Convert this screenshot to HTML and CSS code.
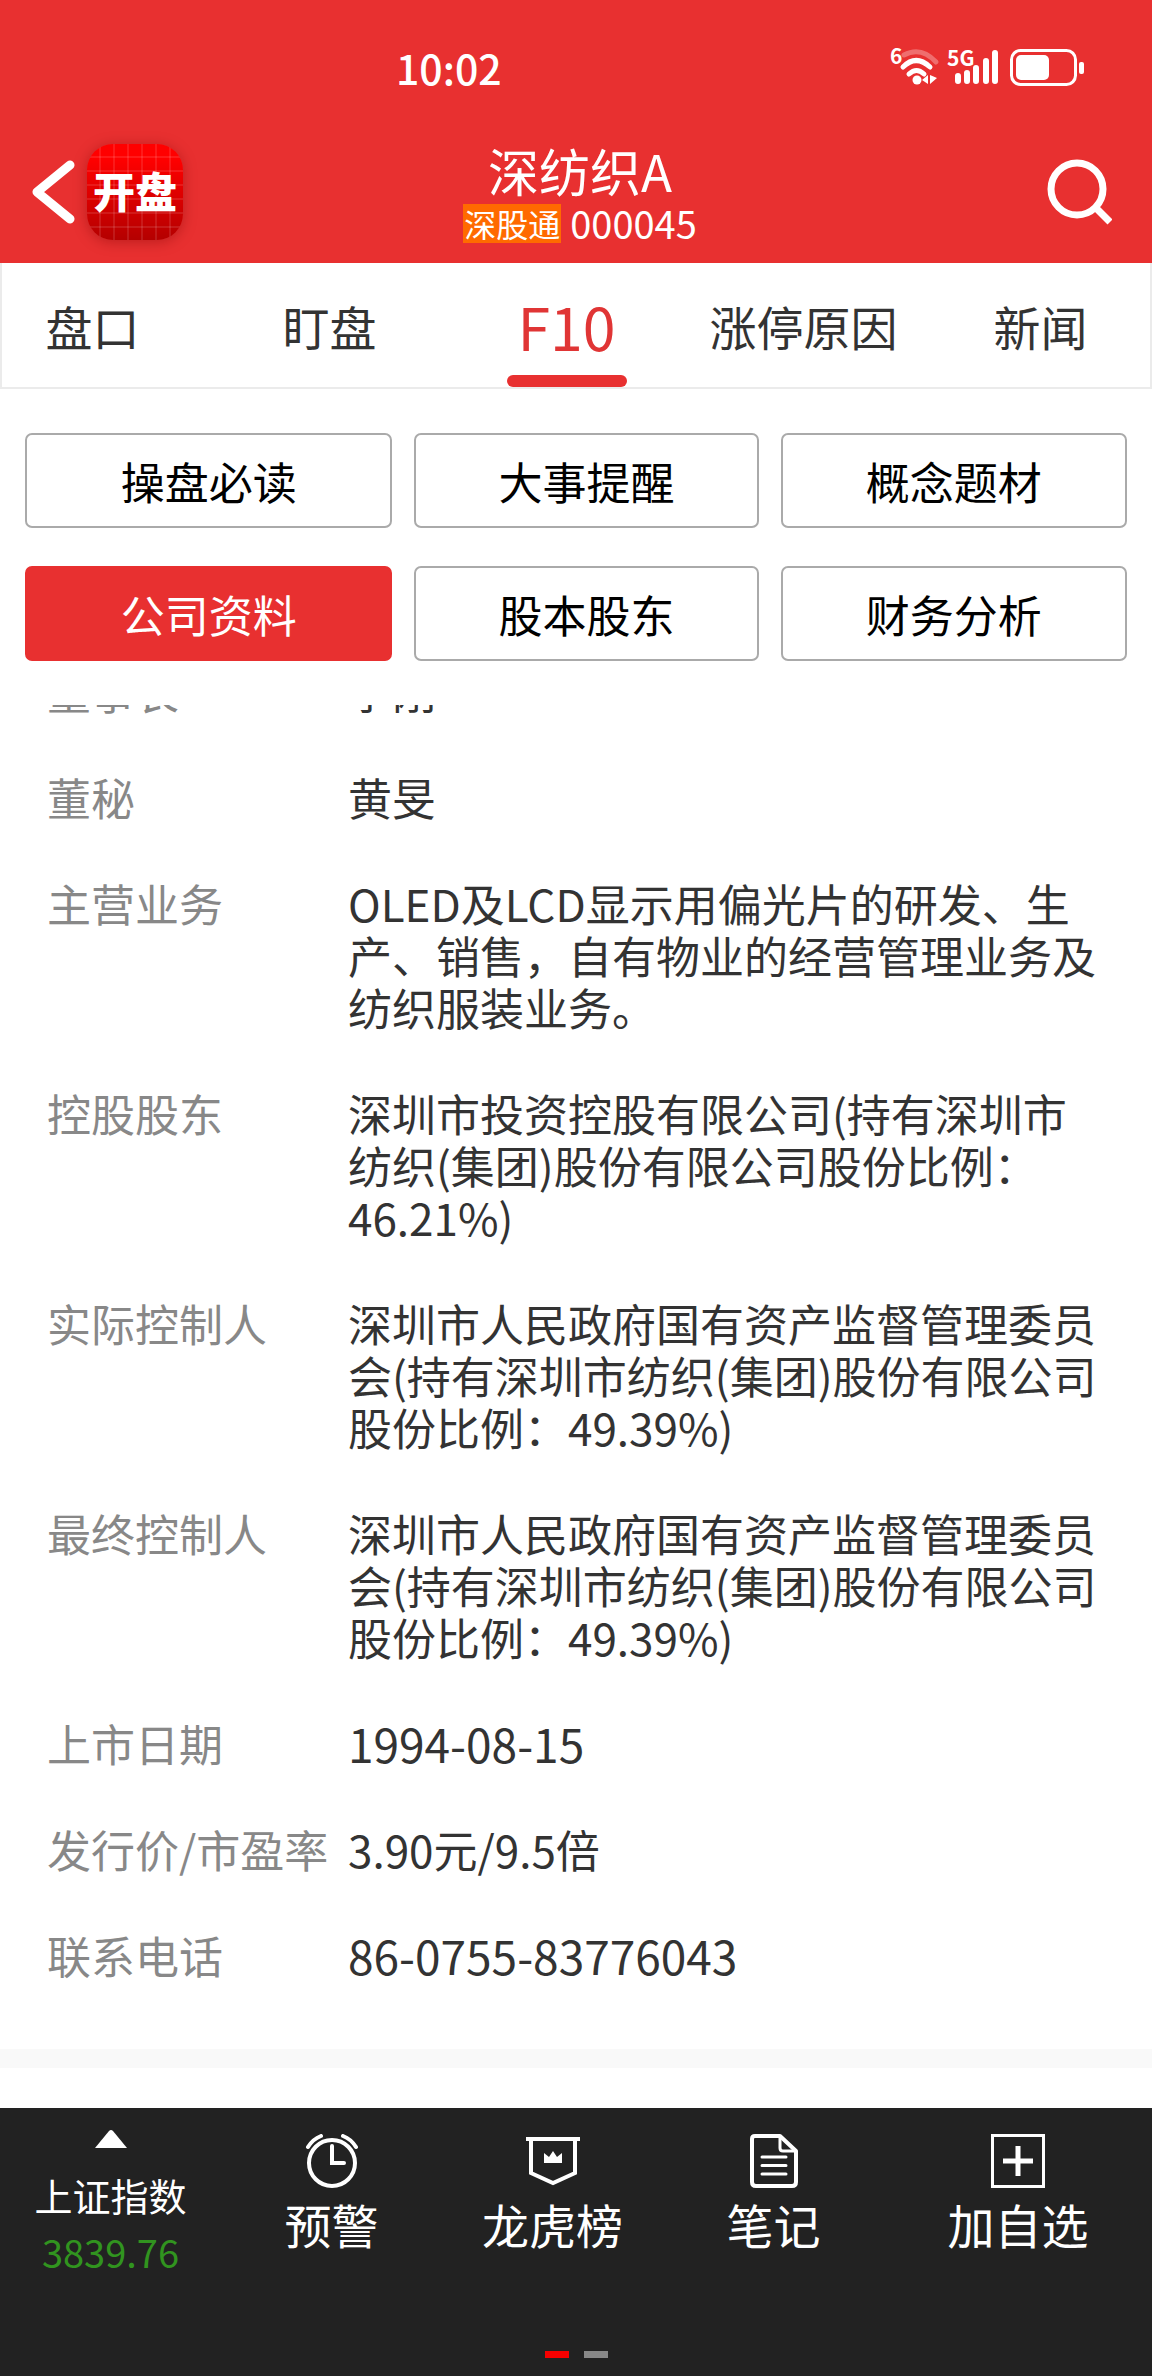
FILE: index.html
```
<!DOCTYPE html>
<html lang="zh-CN">
<head>
    <meta charset="UTF-8">
    <meta name="viewport" content="width=device-width, initial-scale=1.0">
    <title>深纺织A 000045</title>
    <link rel="stylesheet" href="styles.css">
</head>
<body>
    <header class="header">
        <div class="status">
            <span class="clock">10:02</span>
            <svg class="status-icons" width="196" height="40" viewBox="0 0 196 40" fill="none">
                <!-- wifi -->
                <text x="0" y="17" class="net-text">6</text>
                <g stroke="#fff" stroke-width="5" stroke-linecap="round">
                    <path d="M14 8q17-9 32 7" stroke-opacity=".3"/>
                    <path d="M13 20q13-13 27 0"/>
                    <path d="M19 27q7.500-7 15 0"/>
                </g>
                <circle cx="27" cy="33" r="4.500" fill="#fff"/>
                <path d="M38 28v9l-6-4zM40 28v9l7-6z" fill="#fff"/>
                <!-- signal -->
                <text x="57" y="19" class="net-text">5G</text>
                <path d="M68 29v5M77 26v8M86 21v13M96 14v20M105 6v28" stroke="#fff" stroke-width="6" stroke-linecap="round"/>
                <!-- battery -->
                <rect x="121.500" y="3.500" width="64" height="34" rx="9" stroke="#fff" stroke-width="3"/>
                <rect x="126" y="8" width="33" height="25" rx="5" fill="#fff"/>
                <rect x="189" y="15" width="5" height="12" rx="2" fill="#fff"/>
            </svg>
        </div>
        <div class="title-bar">
            <div class="title-left">
                <button class="icon-button" aria-label="返回">
                    <svg width="46" height="68" viewBox="0 0 46 68" fill="none" stroke="#fff" stroke-width="9" stroke-linecap="round" stroke-linejoin="round">
                        <path d="M38 7L5 34l33 27"/>
                    </svg>
                </button>
                <div class="logo">开盘</div>
            </div>
            <div class="stock">
                <h1>深纺织A</h1>
                <div class="stock-code"><span class="badge">深股通</span>000045</div>
            </div>
            <button class="icon-button search" aria-label="搜索">
                <svg width="66" height="66" viewBox="0 0 66 66" fill="none" stroke="#fff" stroke-width="7">
                    <circle cx="31" cy="30" r="26"/>
                    <path d="M50 49l14 14"/>
                </svg>
            </button>
        </div>
    </header>

    <nav class="tabs">
        <div class="tab-list">
            <a class="tab" href="#">盘口</a>
            <a class="tab" href="#">盯盘</a>
            <a class="tab active" href="#">F10</a>
            <a class="tab" href="#">涨停原因</a>
            <a class="tab" href="#">新闻</a>
        </div>
    </nav>

    <div class="filters">
        <button>操盘必读</button>
        <button>大事提醒</button>
        <button>概念题材</button>
        <button class="active">公司资料</button>
        <button>股本股东</button>
        <button>财务分析</button>
    </div>

    <main class="content">
        <dl class="info">
            <dt>董事长</dt>
            <dd>李刚</dd>
            <dt>董秘</dt>
            <dd>黄旻</dd>
            <dt>主营业务</dt>
            <dd>OLED及LCD显示用偏光片的研发、生产、销售，自有物业的经营管理业务及纺织服装业务。</dd>
            <dt>控股股东</dt>
            <dd>深圳市投资控股有限公司(持有深圳市纺织(集团)股份有限公司股份比例：46.21%)</dd>
            <dt>实际控制人</dt>
            <dd>深圳市人民政府国有资产监督管理委员会(持有深圳市纺织(集团)股份有限公司股份比例：49.39%)</dd>
            <dt>最终控制人</dt>
            <dd>深圳市人民政府国有资产监督管理委员会(持有深圳市纺织(集团)股份有限公司股份比例：49.39%)</dd>
            <dt>上市日期</dt>
            <dd class="number">1994-08-15</dd>
            <dt>发行价/市盈率</dt>
            <dd>3.90元/9.5倍</dd>
            <dt>联系电话</dt>
            <dd class="number">86-0755-83776043</dd>
        </dl>
        <div class="divider"></div>
    </main>

    <footer class="footer">
        <div class="toolbar">
            <button class="index">
                <svg width="32" height="18" viewBox="0 0 32 18" fill="#fff"><path d="M14 1q2-2 4 0l14 17H0z"/></svg>
                <span class="index-name">上证指数</span>
                <span class="index-value">3839.76</span>
            </button>
            <button class="tool">
                <svg width="54" height="54" viewBox="0 0 54 54" fill="none" stroke="#fff" stroke-width="4" stroke-linecap="round">
                    <circle cx="27" cy="29" r="23"/>
                    <path d="M27 12v17h12M3 13Q8 5 16 2M38 2q8 3 13 11"/>
                </svg>
                预警
            </button>
            <button class="tool">
                <svg width="54" height="54" viewBox="0 0 54 54" fill="none" stroke="#fff" stroke-width="4">
                    <path d="M0 5h54M5 5v34l22 10 22-10V5"/>
                    <path d="M18 19l5 4 4-6 4 6 5-4v10H18z" fill="#fff" stroke="none"/>
                </svg>
                龙虎榜
            </button>
            <button class="tool">
                <svg width="54" height="54" viewBox="0 0 54 54" fill="none" stroke="#fff" stroke-width="4" stroke-linecap="round" stroke-linejoin="round">
                    <path d="M8 2h25l16 15v31q0 4-4 4H9q-4 0-4-4V5q0-3 3-3z"/>
                    <path d="M33 3v11q0 3 3 3h12" stroke-width="3"/>
                    <path d="M15 23h24M15 31.500h24M15 40h24" stroke-width="3"/>
                </svg>
                笔记
            </button>
            <button class="tool">
                <svg width="54" height="54" viewBox="0 0 54 54" fill="none" stroke="#fff">
                    <rect x="1.500" y="1.500" width="51" height="51" stroke-width="3"/>
                    <path d="M27 12v30M12 27h30" stroke-width="5"/>
                </svg>
                加自选
            </button>
        </div>
        <div class="pager">
            <span class="dot active"></span>
            <span class="dot"></span>
        </div>
    </footer>
</body>
</html>
```
FILE: styles.css
```
* {
    box-sizing: border-box;
}
body {
    font-family: "Noto Sans CJK SC", sans-serif;
    background-color: #fff;
    color: #333;
    margin: 0;
    min-height: 100vh;
    display: flex;
    flex-direction: column;
}
button {
    font-family: inherit;
    background: none;
    border: none;
    padding: 0;
    cursor: pointer;
}
svg {
    display: block;
}

.header {
    background-color: #e83030;
    color: #fff;
    padding: 46px 24px 19px 32px;
}
.status {
    display: flex;
    justify-content: space-between;
    align-items: center;
    height: 42px;
    padding: 0 42px 0 364px;
}
.status-icons {
    overflow: visible;
}
.clock {
    font-size: 41px;
    font-weight: 500;
    line-height: 40px;
}
.net-text {
    font-family: "Liberation Sans Narrow", "Noto Sans CJK SC", sans-serif;
    font-size: 21px;
    font-weight: 700;
    fill: #fff;
}
.title-bar {
    display: grid;
    grid-template-columns: 1fr auto 1fr;
    align-items: center;
    padding-top: 52px;
}
.title-left {
    display: flex;
    align-items: center;
    gap: 9px;
}
.logo {
    width: 96px;
    height: 96px;
    border-radius: 26px;
    background:
        repeating-linear-gradient(90deg, transparent 0 12px, rgba(255, 255, 255, 0.1) 12px 14px),
        repeating-linear-gradient(transparent 0 12px, rgba(255, 255, 255, 0.1) 12px 14px),
        linear-gradient(#ff0000 15%, #b40000);
    box-shadow: 0 2px 14px rgba(120, 0, 0, 0.4);
    font-size: 42px;
    font-weight: 900;
    line-height: 92px;
    text-align: center;
}
.stock {
    text-align: center;
}
.stock h1 {
    font-size: 51px;
    font-weight: 400;
    line-height: 60px;
    margin: 0;
}
.stock-code {
    display: flex;
    align-items: center;
    justify-content: center;
    gap: 9px;
    margin-top: 2px;
    font-size: 38px;
    line-height: 42px;
}
.badge {
    background-color: #ff6a00;
    font-size: 32px;
    line-height: 39px;
    padding: 0 1px;
}
.search {
    justify-self: end;
    padding-right: 16px;
}

.tabs {
    border: 2px solid #ebebeb;
    border-top: none;
    overflow: hidden;
}
/* outer tabs run a little past the screen edges */
.tab-list {
    display: grid;
    grid-template-columns: repeat(5, 1fr);
    margin: 0 -9px 0 -28px;
}
.tab {
    display: flex;
    justify-content: center;
    align-items: center;
    position: relative;
    height: 124px;
    color: #333;
    font-size: 47px;
    text-decoration: none;
}
.tab.active {
    color: #e03535;
    font-size: 59px;
}
.tab.active::after {
    content: "";
    position: absolute;
    bottom: 0;
    width: 120px;
    height: 12px;
    border-radius: 6px;
    background-color: #e83030;
}

.filters {
    display: grid;
    grid-template-columns: 367fr 344fr 346fr;
    gap: 38px 22px;
    padding: 44px 25px;
}
.filters button {
    height: 95px;
    border: 2px solid #aaa;
    border-radius: 7px;
    color: #000;
    font-size: 44px;
}
.filters .active {
    background-color: #e83030;
    border-color: #e83030;
    color: #fff;
}

.content {
    flex: 1;
    overflow: hidden;
}
/* the list is scrolled, its first row is partly hidden */
.info {
    display: grid;
    grid-template-columns: 301px 1fr;
    row-gap: 54px;
    margin: -40px 0 68px;
    padding: 0 48px 0 47px;
    font-size: 44px;
    line-height: 52px;
}
.info dt {
    color: #888;
    white-space: nowrap;
}
.info dd {
    margin: 0;
}
.info .number {
    font-size: 46px;
}
.divider {
    height: 19px;
    background-color: #f9f9f9;
}

.footer {
    background-color: #222;
    padding: 22px 0 18px;
}
.toolbar {
    display: grid;
    grid-template-columns: 221fr 221fr 221fr 221fr 268fr;
    height: 221px;
    align-items: start;
}
.toolbar button {
    display: flex;
    flex-direction: column;
    align-items: center;
    color: #fff;
}
.tool {
    gap: 8px;
    padding-top: 4px;
    font-size: 47px;
    line-height: 56px;
}
.index {
    gap: 17px;
    font-size: 38px;
    line-height: 40px;
}
.index svg {
    margin-bottom: 10px;
}
.index-value {
    color: #31941f;
}
.pager {
    display: flex;
    justify-content: center;
    gap: 15px;
}
.dot {
    width: 24px;
    height: 7px;
    background-color: #888;
}
.dot.active {
    background-color: #f60000;
}
```
